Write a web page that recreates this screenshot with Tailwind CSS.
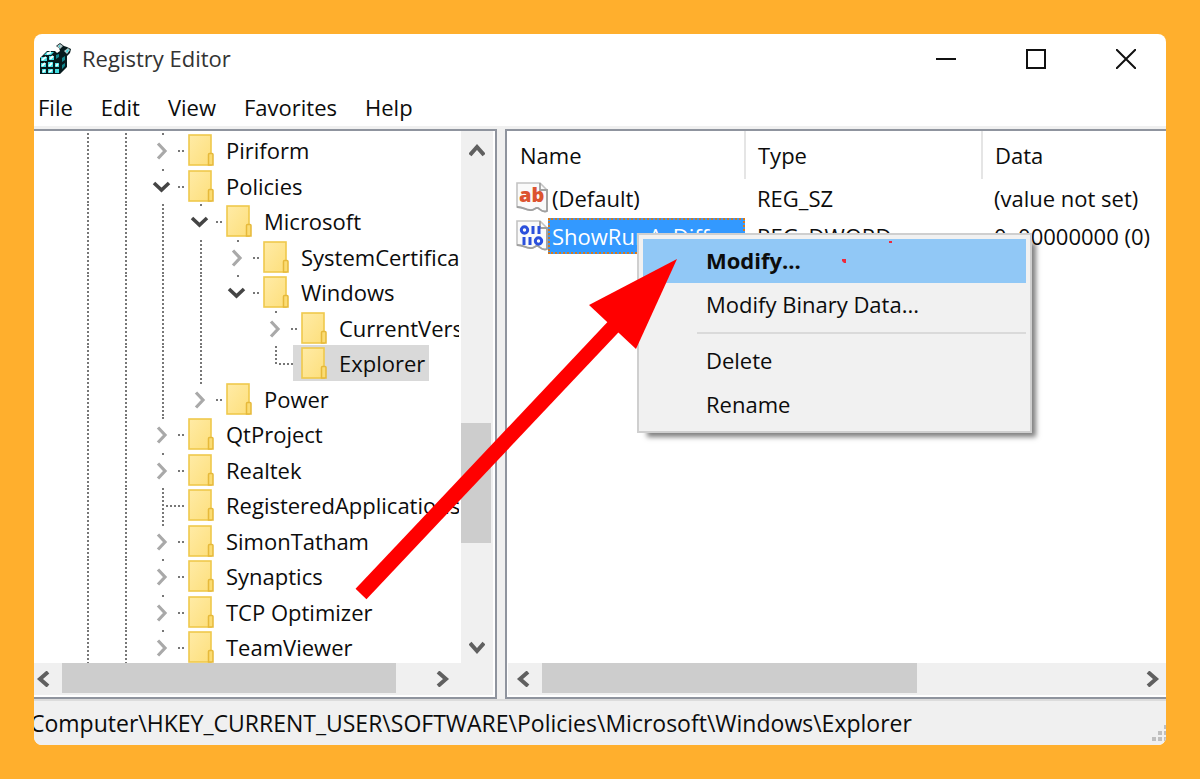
<!DOCTYPE html>
<html lang="en">
<head>
    <meta charset="UTF-8">
    <meta name="viewport" content="width=device-width, initial-scale=1.0">
    <title>Registry Editor</title>
    <script src="https://cdn.jsdelivr.net/npm/@tailwindcss/browser@4"></script>
</head>
<body class="min-h-screen bg-[#ffaf2d] p-[34px] font-['Open_Sans','Noto_Sans',sans-serif] text-[22px] leading-8 text-[#0c0c0c]">

    <!-- Shared icons -->
    <svg class="absolute h-0 w-0">
        <defs>
            <linearGradient id="folder-fill" x1="0" y1="0" x2="1" y2="1">
                <stop offset="0" stop-color="#ffeba6" />
                <stop offset="1" stop-color="#fddf7c" />
            </linearGradient>
        </defs>
        <symbol id="folder" viewBox="0 0 26 32">
            <rect x="1" y="1" width="22" height="30" fill="url(#folder-fill)" stroke="#efc94c" stroke-width="1.6" />
            <path d="M20.5 31V20.500q0-1 1-1h2.500q1 0 1 1V31z" fill="#fbdc74" stroke="#e6b93a" stroke-width="1.500" />
        </symbol>
        <symbol id="guide" viewBox="0 0 38 36">
            <path d="M19 1v35" stroke="#777" stroke-width="2" stroke-dasharray="2 2" />
        </symbol>
        <symbol id="closed" viewBox="0 0 44 36">
            <path d="M14 11.500L21 19L14 26.500" fill="none" stroke="#a9a9a9" stroke-width="3.200" />
            <path d="M18 1h2v2h-2zM34 18h2v2h-2zM38 18h2v2h-2z" fill="#777" />
        </symbol>
        <symbol id="open" viewBox="0 0 44 36">
            <path d="M10 15L17.500 22L25 15" fill="none" stroke="#454545" stroke-width="3.600" />
            <path d="M18 1h2v2h-2zM34 18h2v2h-2zM38 18h2v2h-2z" fill="#777" />
        </symbol>
        <symbol id="leaf-mid" viewBox="0 0 44 36">
            <path d="M19 1v35M22 19h20" stroke="#777" stroke-width="2" stroke-dasharray="2 2" />
        </symbol>
        <symbol id="leaf-end" viewBox="0 0 44 36">
            <path d="M19 1v19M22 19h20" stroke="#777" stroke-width="2" stroke-dasharray="2 2" />
        </symbol>
        <symbol id="arrow-left" viewBox="0 0 14 16"><path d="M12 1L4 8L12 15" fill="none" stroke="#606060" stroke-width="4" /></symbol>
        <symbol id="arrow-right" viewBox="0 0 14 16"><path d="M2 1L10 8L2 15" fill="none" stroke="#606060" stroke-width="4" /></symbol>
        <symbol id="arrow-up" viewBox="0 0 16 14"><path d="M1 12L8 4L15 12" fill="none" stroke="#606060" stroke-width="4" /></symbol>
        <symbol id="arrow-down" viewBox="0 0 16 14"><path d="M1 2L8 10L15 2" fill="none" stroke="#606060" stroke-width="4" /></symbol>
        <symbol id="page" viewBox="0 0 32 32">
            <path d="M1 25V1H24L31 8V29C27 31 25 28 22 26C19 25 18 29 14 28C9 28 8 25 1 25z" fill="#fafafa" stroke="#c4c4c4" stroke-width="1.600" />
            <path d="M24 1V8H31V29C27 31 25 28 22 26C19 25 18 29 14 28C9 28 8 25 1 25" fill="none" stroke="#a0a0a0" stroke-width="1.800" />
        </symbol>
    </svg>

    <div class="relative overflow-hidden rounded-lg bg-white">

        <!-- Title bar -->
        <header class="flex h-[50px] items-center pl-[6px]">
            <svg class="h-8 w-8 shrink-0" viewBox="0 0 32 32">
                <path d="M0 15L7 8H15L17 10L20 8L19 5L16 3L20 0L24 3L27 4L31 6L30 10L27 13V24L20 31H0z" fill="#061a1d" />
                <path d="M7 9h7l-3 3H4zM1 14h6v4H1zM9 13h5v4H9zM1 20h5v4H1zM8 19h5v5H8zM15 20h4v4h-4zM2 26h4v4H2zM8 26h5v4H8zM15 26h4v4h-4z" fill="#42dde2" />
                <path d="M2 17l4-3M10 16l3-3M2 23l3-3M9 23l3-3M3 29l2-2M9 29l3-2M7 11l4-2M16 23l2-2" stroke="#f0ffff" stroke-width="2" />
                <path d="M16 12l3-1v3l-3 2zM22 15l3-2v4l-3 2zM22 22l3-2v3l-3 3z" fill="#12868c" />
                <path d="M17 3L20 1L23 3L20 6z" fill="#b5c8ca" />
                <path d="M24 8L28 5L30 7L27 11z" fill="#b5c8ca" />
                <path d="M19 3L20 2V5zM26 8L29 6L27 10z" fill="#20d8dd" />
            </svg>
            <h1 class="ml-[10px] flex-1 pb-[2px] text-[#333]">Registry Editor</h1>
            <div class="-mr-[5px] flex h-full">
                <button class="flex w-[90px] items-center justify-center" aria-label="Minimize">
                    <svg class="h-5 w-5" viewBox="0 0 20 20"><path d="M0 10h20" stroke="#111" stroke-width="2" /></svg>
                </button>
                <button class="flex w-[90px] items-center justify-center" aria-label="Maximize">
                    <svg class="h-5 w-5" viewBox="0 0 20 20"><path d="M1 1h18v18H1z" fill="none" stroke="#111" stroke-width="2" /></svg>
                </button>
                <button class="flex w-[90px] items-center justify-center" aria-label="Close">
                    <svg class="h-5 w-5" viewBox="0 0 20 20"><path d="M0 0l20 20M20 0L0 20" stroke="#111" stroke-width="2" /></svg>
                </button>
            </div>
        </header>

        <!-- Menu bar -->
        <nav class="flex h-[45px] items-center gap-7 border-b-3 border-[#f0f0f0] pt-1 pl-1">
            <button>File</button>
            <button>Edit</button>
            <button>View</button>
            <button>Favorites</button>
            <button>Help</button>
        </nav>

        <main class="flex bg-[#f0f0f0]">

            <!-- Key tree -->
            <section class="w-[463px] shrink-0 border-y-2 border-r-2 border-[#8f949e] bg-white">
                <div class="flex h-[532px]">
                    <ul class="w-[425px] shrink-0 overflow-hidden pt-px pl-[35px] whitespace-nowrap">
                        <li class="flex h-9">
                            <svg class="w-[38px] shrink-0"><use href="#guide" width="38" height="36" /></svg>
                            <svg class="w-[37px] shrink-0"><use href="#guide" width="38" height="36" /></svg>
                            <svg class="w-9 shrink-0 overflow-visible"><use href="#closed" width="44" height="36" /></svg>
                            <a href="#" class="flex items-center gap-3 px-2"><svg class="h-8 w-[26px]"><use href="#folder" /></svg>Piriform</a>
                        </li>
                        <li class="flex h-[35px]">
                            <svg class="w-[38px] shrink-0"><use href="#guide" width="38" height="36" /></svg>
                            <svg class="w-[37px] shrink-0"><use href="#guide" width="38" height="36" /></svg>
                            <svg class="w-9 shrink-0 overflow-visible"><use href="#open" width="44" height="36" /></svg>
                            <a href="#" class="flex items-center gap-3 px-2"><svg class="h-8 w-[26px]"><use href="#folder" /></svg>Policies</a>
                        </li>
                        <li class="flex h-9">
                            <svg class="w-[38px] shrink-0"><use href="#guide" width="38" height="36" /></svg>
                            <svg class="w-[37px] shrink-0"><use href="#guide" width="38" height="36" /></svg>
                            <svg class="w-[38px] shrink-0"><use href="#guide" width="38" height="36" /></svg>
                            <svg class="w-9 shrink-0 overflow-visible"><use href="#open" width="44" height="36" /></svg>
                            <a href="#" class="flex items-center gap-3 px-2"><svg class="h-8 w-[26px]"><use href="#folder" /></svg>Microsoft</a>
                        </li>
                        <li class="flex h-[35px]">
                            <svg class="w-[38px] shrink-0"><use href="#guide" width="38" height="36" /></svg>
                            <svg class="w-[37px] shrink-0"><use href="#guide" width="38" height="36" /></svg>
                            <svg class="w-[38px] shrink-0"><use href="#guide" width="38" height="36" /></svg>
                            <svg class="w-[37px] shrink-0"><use href="#guide" width="38" height="36" /></svg>
                            <svg class="w-9 shrink-0 overflow-visible"><use href="#closed" width="44" height="36" /></svg>
                            <a href="#" class="flex items-center gap-3 px-2"><svg class="h-8 w-[26px]"><use href="#folder" /></svg>SystemCertificates</a>
                        </li>
                        <li class="flex h-9">
                            <svg class="w-[38px] shrink-0"><use href="#guide" width="38" height="36" /></svg>
                            <svg class="w-[37px] shrink-0"><use href="#guide" width="38" height="36" /></svg>
                            <svg class="w-[38px] shrink-0"><use href="#guide" width="38" height="36" /></svg>
                            <svg class="w-[37px] shrink-0"><use href="#guide" width="38" height="36" /></svg>
                            <svg class="w-9 shrink-0 overflow-visible"><use href="#open" width="44" height="36" /></svg>
                            <a href="#" class="flex items-center gap-3 px-2"><svg class="h-8 w-[26px]"><use href="#folder" /></svg>Windows</a>
                        </li>
                        <li class="flex h-[35px]">
                            <svg class="w-[38px] shrink-0"><use href="#guide" width="38" height="36" /></svg>
                            <svg class="w-[37px] shrink-0"><use href="#guide" width="38" height="36" /></svg>
                            <svg class="w-[38px] shrink-0"><use href="#guide" width="38" height="36" /></svg>
                            <svg class="w-[37px] shrink-0"><use href="#guide" width="38" height="36" /></svg>
                            <svg class="ml-[38px] w-9 shrink-0 overflow-visible"><use href="#closed" width="44" height="36" /></svg>
                            <a href="#" class="flex items-center gap-3 px-2"><svg class="h-8 w-[26px]"><use href="#folder" /></svg>CurrentVersion</a>
                        </li>
                        <li class="flex h-9">
                            <svg class="w-[38px] shrink-0"><use href="#guide" width="38" height="36" /></svg>
                            <svg class="w-[37px] shrink-0"><use href="#guide" width="38" height="36" /></svg>
                            <svg class="w-[38px] shrink-0"><use href="#guide" width="38" height="36" /></svg>
                            <svg class="w-[37px] shrink-0"><use href="#guide" width="38" height="36" /></svg>
                            <svg class="ml-[38px] w-9 shrink-0 overflow-visible"><use href="#leaf-end" width="44" height="36" /></svg>
                            <a href="#" class="flex items-center gap-3 bg-[#d9d9d9] pr-1 pl-2"><svg class="h-8 w-[26px]"><use href="#folder" /></svg>Explorer</a>
                        </li>
                        <li class="flex h-[35px]">
                            <svg class="w-[38px] shrink-0"><use href="#guide" width="38" height="36" /></svg>
                            <svg class="w-[37px] shrink-0"><use href="#guide" width="38" height="36" /></svg>
                            <svg class="w-[38px] shrink-0"><use href="#guide" width="38" height="36" /></svg>
                            <svg class="w-9 shrink-0 overflow-visible"><use href="#closed" width="44" height="36" /></svg>
                            <a href="#" class="flex items-center gap-3 px-2"><svg class="h-8 w-[26px]"><use href="#folder" /></svg>Power</a>
                        </li>
                        <li class="flex h-9">
                            <svg class="w-[38px] shrink-0"><use href="#guide" width="38" height="36" /></svg>
                            <svg class="w-[37px] shrink-0"><use href="#guide" width="38" height="36" /></svg>
                            <svg class="w-9 shrink-0 overflow-visible"><use href="#closed" width="44" height="36" /></svg>
                            <a href="#" class="flex items-center gap-3 px-2"><svg class="h-8 w-[26px]"><use href="#folder" /></svg>QtProject</a>
                        </li>
                        <li class="flex h-[35px]">
                            <svg class="w-[38px] shrink-0"><use href="#guide" width="38" height="36" /></svg>
                            <svg class="w-[37px] shrink-0"><use href="#guide" width="38" height="36" /></svg>
                            <svg class="w-9 shrink-0 overflow-visible"><use href="#closed" width="44" height="36" /></svg>
                            <a href="#" class="flex items-center gap-3 px-2"><svg class="h-8 w-[26px]"><use href="#folder" /></svg>Realtek</a>
                        </li>
                        <li class="flex h-9">
                            <svg class="w-[38px] shrink-0"><use href="#guide" width="38" height="36" /></svg>
                            <svg class="w-[37px] shrink-0"><use href="#guide" width="38" height="36" /></svg>
                            <svg class="w-9 shrink-0 overflow-visible"><use href="#leaf-mid" width="44" height="36" /></svg>
                            <a href="#" class="flex items-center gap-3 px-2"><svg class="h-8 w-[26px]"><use href="#folder" /></svg>RegisteredApplications</a>
                        </li>
                        <li class="flex h-[35px]">
                            <svg class="w-[38px] shrink-0"><use href="#guide" width="38" height="36" /></svg>
                            <svg class="w-[37px] shrink-0"><use href="#guide" width="38" height="36" /></svg>
                            <svg class="w-9 shrink-0 overflow-visible"><use href="#closed" width="44" height="36" /></svg>
                            <a href="#" class="flex items-center gap-3 px-2"><svg class="h-8 w-[26px]"><use href="#folder" /></svg>SimonTatham</a>
                        </li>
                        <li class="flex h-9">
                            <svg class="w-[38px] shrink-0"><use href="#guide" width="38" height="36" /></svg>
                            <svg class="w-[37px] shrink-0"><use href="#guide" width="38" height="36" /></svg>
                            <svg class="w-9 shrink-0 overflow-visible"><use href="#closed" width="44" height="36" /></svg>
                            <a href="#" class="flex items-center gap-3 px-2"><svg class="h-8 w-[26px]"><use href="#folder" /></svg>Synaptics</a>
                        </li>
                        <li class="flex h-[35px]">
                            <svg class="w-[38px] shrink-0"><use href="#guide" width="38" height="36" /></svg>
                            <svg class="w-[37px] shrink-0"><use href="#guide" width="38" height="36" /></svg>
                            <svg class="w-9 shrink-0 overflow-visible"><use href="#closed" width="44" height="36" /></svg>
                            <a href="#" class="flex items-center gap-3 px-2"><svg class="h-8 w-[26px]"><use href="#folder" /></svg>TCP Optimizer</a>
                        </li>
                        <li class="flex h-9">
                            <svg class="w-[38px] shrink-0"><use href="#guide" width="38" height="36" /></svg>
                            <svg class="w-[37px] shrink-0"><use href="#guide" width="38" height="36" /></svg>
                            <svg class="w-9 shrink-0 overflow-visible"><use href="#closed" width="44" height="36" /></svg>
                            <a href="#" class="flex items-center gap-3 px-2"><svg class="h-8 w-[26px]"><use href="#folder" /></svg>TeamViewer</a>
                        </li>
                    </ul>
                    <!-- Vertical scrollbar -->
                    <div class="ml-[2px] flex w-8 flex-col items-center bg-[#f0f0f0] pt-3 pb-2">
                        <button aria-label="Scroll up"><svg class="h-[14px] w-4"><use href="#arrow-up" /></svg></button>
                        <div class="mt-[266px] mb-auto h-[120px] w-full shrink-0 border-r-2 border-[#f0f0f0] bg-[#cdcdcd]"></div>
                        <button aria-label="Scroll down"><svg class="h-[14px] w-4"><use href="#arrow-down" /></svg></button>
                    </div>
                </div>
                <!-- Horizontal scrollbar -->
                <div class="mr-[2px] mb-[2px] flex h-8 items-center bg-[#f0f0f0]">
                    <button class="w-7 pl-[2px]" aria-label="Scroll left"><svg class="h-4 w-[14px]"><use href="#arrow-left" /></svg></button>
                    <div class="mb-[2px] h-[30px] w-[334px] bg-[#cdcdcd]"></div>
                    <button class="ml-10" aria-label="Scroll right"><svg class="h-4 w-[14px]"><use href="#arrow-right" /></svg></button>
                </div>
            </section>

            <!-- Value list -->
            <section class="ml-2 flex min-w-0 flex-1 flex-col justify-between border-y-2 border-l-2 border-[#8f949e] bg-white pl-px">
                <table class="w-full table-fixed whitespace-nowrap">
                    <colgroup>
                        <col class="w-[237px]">
                        <col class="w-[237px]">
                        <col>
                    </colgroup>
                    <thead>
                        <tr class="h-12 text-left">
                            <th class="border-r-2 border-[#e5e5e5] pl-3 font-normal">Name</th>
                            <th class="border-r-2 border-[#e5e5e5] pl-3 font-normal">Type</th>
                            <th class="pl-3 font-normal">Data</th>
                        </tr>
                    </thead>
                    <tbody>
                        <tr class="h-[38px]">
                            <td>
                                <div class="flex items-center pl-2">
                                    <svg class="h-8 w-8 shrink-0" viewBox="0 0 32 32">
                                        <use href="#page" />
                                        <text x="3" y="20" class="font-['Open_Sans'] text-[20px] font-extrabold" fill="#dc5430">ab</text>
                                    </svg>
                                    <span class="pl-1">(Default)</span>
                                </div>
                            </td>
                            <td class="pl-3">REG_SZ</td>
                            <td class="pl-3">(value not set)</td>
                        </tr>
                        <tr class="h-[38px]">
                            <td>
                                <div class="flex items-center pl-2">
                                    <svg class="h-8 w-8 shrink-0" viewBox="0 0 32 32">
                                        <use href="#page" />
                                        <g fill="none" stroke="#2b50dc" stroke-width="3">
                                            <circle cx="8.500" cy="10" r="3.200" />
                                            <path d="M17 6v8M23 6v8M8 17v8M14 17v8" />
                                            <circle cx="22.500" cy="21" r="3.200" />
                                        </g>
                                    </svg>
                                    <span class="flex-1 border-2 border-dotted border-[#d67a1e] bg-[#3399ff] pl-[2px] text-white">ShowRunAsDiff...</span>
                                </div>
                            </td>
                            <td class="pl-3">REG_DWORD</td>
                            <td class="pl-3">0x00000000 (0)</td>
                        </tr>
                    </tbody>
                </table>
                <!-- Horizontal scrollbar -->
                <div class="mb-[2px] flex h-8 items-center bg-[#f0f0f0]">
                    <button class="w-[34px] pl-2" aria-label="Scroll left"><svg class="h-4 w-[14px]"><use href="#arrow-left" /></svg></button>
                    <div class="mb-[2px] h-[30px] w-[375px] bg-[#cdcdcd]"></div>
                    <button class="mr-[6px] ml-auto" aria-label="Scroll right"><svg class="h-4 w-[14px]"><use href="#arrow-right" /></svg></button>
                </div>
            </section>
        </main>

        <!-- Status bar -->
        <footer class="flex h-[46px] items-center justify-between border-t-2 border-[#dcdcdc] bg-[#f0f0f0] whitespace-nowrap">
            <p class="-ml-1 text-[23px]">Computer\HKEY_CURRENT_USER\SOFTWARE\Policies\Microsoft\Windows\Explorer</p>
            <svg class="mb-1 h-4 w-[14px] self-end" viewBox="0 0 14 16">
                <path d="M12 0h4v4h-4zM6 6h4v4H6zM12 6h4v4h-4zM0 12h4v4H0zM6 12h4v4H6zM12 12h4v4h-4z" fill="#bfbfbf" />
            </svg>
        </footer>

        <!-- Context menu -->
        <div class="absolute top-[199px] left-[603px] w-[395px] border-2 border-[#cfcfcf] bg-[#f1f1f1] p-1 shadow-[7px_7px_5px_-3px_rgba(0,0,0,0.5)]">
            <button class="block h-11 w-full bg-[#91c8f6] pb-[3px] pl-[63px] text-left font-bold">Modify...</button>
            <button class="block h-11 w-full pb-[3px] pl-[63px] text-left">Modify Binary Data...</button>
            <hr class="my-[5px] ml-[54px] border-t-2 border-[#dadada]">
            <button class="block h-11 w-full pb-[3px] pl-[63px] text-left">Delete</button>
            <button class="block h-11 w-full pb-[3px] pl-[63px] text-left">Rename</button>
        </div>

        <!-- Red pointer arrow and stray marks -->
        <svg class="pointer-events-none absolute top-0 left-0 h-[711px] w-[1132px]" viewBox="34 34 1132 711">
            <path d="M361 594L616 324" stroke="#f00" stroke-width="15" />
            <path d="M677 259L589 305L636 349z" fill="#f00" />
            <path d="M842 259h4v4h-2l-2-2zM889 241h3v2h-3z" fill="#ee2a3c" />
        </svg>
    </div>

</body>
</html>
